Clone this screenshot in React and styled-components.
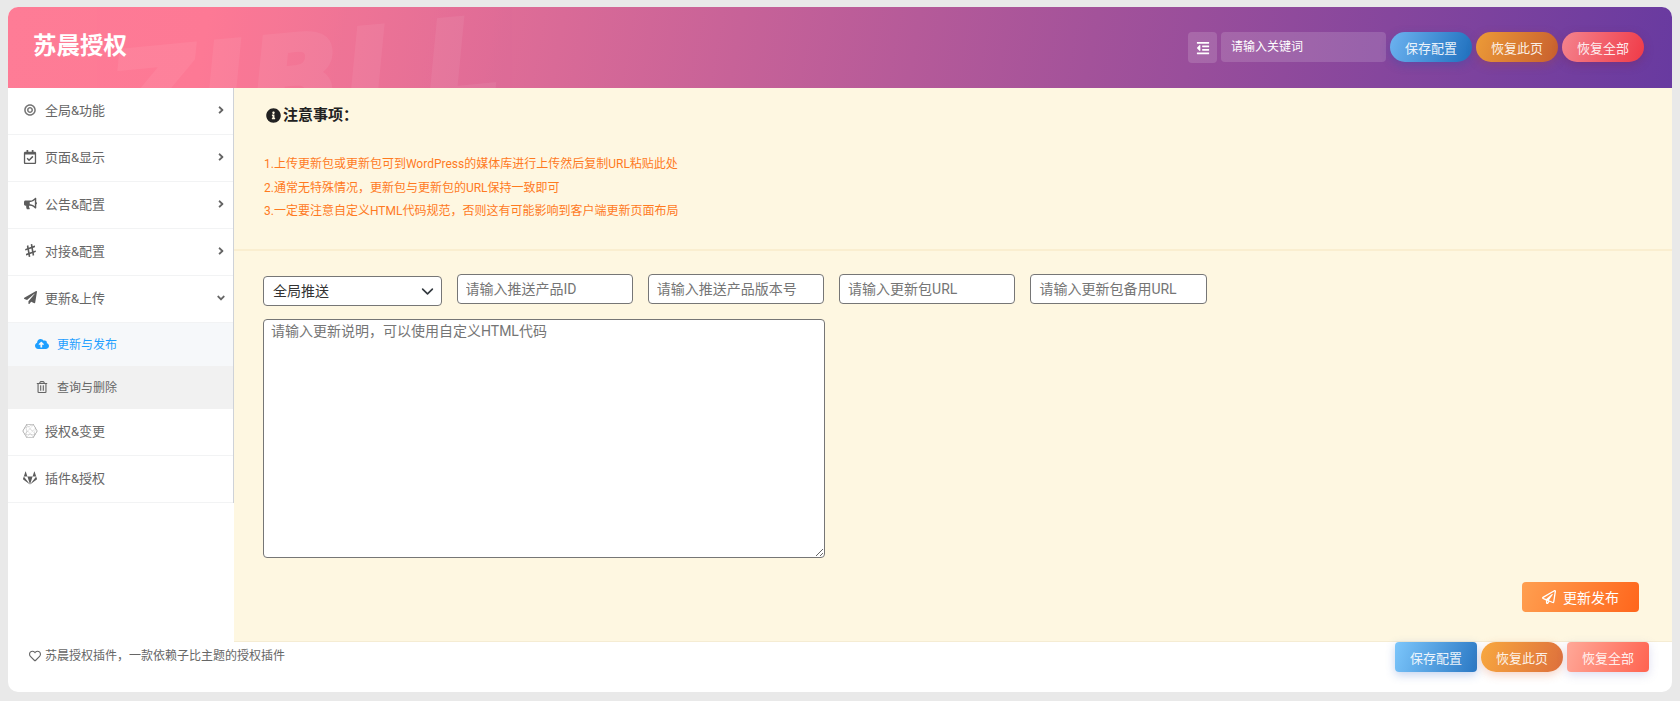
import React from 'react'
import styled, { createGlobalStyle } from 'styled-components'
import {
  FaBullseye, FaRegCalendarCheck, FaBullhorn, FaHashtag, FaPaperPlane, FaRegPaperPlane,
  FaCloudUploadAlt, FaRegTrashAlt, FaConnectdevelop, FaGitlab, FaAngleRight, FaAngleDown,
  FaInfoCircle, FaRegHeart, FaOutdent
} from 'react-icons/fa'

const font = `Roboto, "Noto Sans CJK SC", "Liberation Sans", sans-serif`

const chevron = `url("data:image/svg+xml,%3Csvg xmlns='http://www.w3.org/2000/svg' viewBox='0 0 16 16'%3E%3Cpath fill='none' stroke='%23343a40' stroke-linecap='round' stroke-linejoin='round' stroke-width='2' d='M2 5l6 6 6-6'/%3E%3C/svg%3E")`

const GlobalStyle = createGlobalStyle`
  html, body { margin: 0; padding: 0; background: #e9e9e9; }
  body { font-family: ${font}; font-size: 13px; color: #444; }
  * { box-sizing: border-box; }
`

const Page = styled.div`
  height: 701px;
  padding: 7px 8px 9px 8px;
  overflow: hidden;
`

const Card = styled.div`
  height: 685px;
  background: #fff;
  border-radius: 10px;
  overflow: hidden;
  display: flex;
  flex-direction: column;
`

const Header = styled.header`
  position: relative;
  flex: 0 0 81px;
  display: flex;
  align-items: center;
  justify-content: space-between;
  padding: 0 28px 0 25px;
  overflow: hidden;
  background: linear-gradient(100deg, #fe7c96 0%, #fd7a95 12%, #a3529a 65%, #683aa0 100%);
`

const Watermark = styled.span`
  position: absolute;
  left: 110px;
  top: 21px;
  font: italic 700 118px "DejaVu Sans", sans-serif;
  letter-spacing: 5px;
  color: #fff;
  -webkit-text-stroke: 5px #fff;
  opacity: 0.06;
  white-space: nowrap;
  transform: rotate(-5.5deg);
  transform-origin: left bottom;
`

const Title = styled.h1`
  position: relative;
  margin: 0 0 8px;
  font-size: 23.5px;
  font-weight: 700;
  color: #fff;
`

const Tools = styled.div`
  position: relative;
  display: flex;
  align-items: flex-start;
  gap: 4px;
`

const IconBox = styled.div`
  width: 29px;
  height: 31px;
  border-radius: 4px;
  background: rgba(255, 255, 255, 0.15);
  color: #fff;
  font-size: 14px;
  display: flex;
  align-items: center;
  justify-content: center;
`

const Search = styled.input`
  width: 165px;
  height: 30px;
  border: 0;
  outline: 0;
  border-radius: 4px;
  padding: 0 10px;
  font: 12px ${font};
  background: rgba(255, 255, 255, 0.15);
  &::placeholder { color: #fff; opacity: 1; }
`

const Pill = styled.button`
  width: 82px;
  height: 30px;
  border: 0;
  padding: 0;
  font: 13px ${font};
  color: rgba(255, 255, 255, 0.9);
  border-radius: ${props => props.$square ? '4px' : '15px'};
  background: ${props => props.$bg};
  box-shadow: 0 3px 10px ${props => props.$glow};
`

const Body = styled.div`
  flex: 1;
  display: flex;
  min-height: 0;
`

const Sidebar = styled.nav`
  flex: 0 0 226px;
  background: #fff;
`

const MenuList = styled.div`
  border-right: 1px solid #ced2d8;
`

const MenuItem = styled.div`
  height: 47px;
  display: flex;
  align-items: center;
  padding: 0 6px 3px 15px;
  border-bottom: 1px solid #f2f3f4;
  color: #666;
  font-size: 13px;
`

const MenuIcon = styled.span`
  flex: 0 0 14px;
  min-width: 0;
  margin-right: 8px;
  display: flex;
  justify-content: center;
  font-size: ${props => props.$size || 14}px;
  color: ${props => props.$color || '#5c5c5c'};
  svg { flex: none; }
`

const SlackMark = styled(FaHashtag)`
  transform: rotate(-20deg);
`

const Arrow = styled.span`
  margin-left: auto;
  display: flex;
  font-size: 12px;
  color: #666;
`

const SubItem = styled.div`
  height: 43px;
  display: flex;
  align-items: center;
  padding: 0 0 2px 27px;
  font-size: 12px;
  color: ${props => props.$active ? '#1e9fff' : '#666'};
  background: ${props => props.$active ? '#f6f8fa' : '#f1f1f1'};
  svg { width: 14px; font-size: 12px; margin-right: 8px; }
`

const Main = styled.main`
  flex: 1;
  background: #fef7e1;
  border-bottom: 1px solid #f5ecd3;
  display: flex;
  flex-direction: column;
`

const Notice = styled.section`
  height: 163px;
  padding: 17px 30px 0 30px;
  border-bottom: 2px solid #faeed0;
`

const NoticeTitle = styled.h4`
  margin: 0 0 28px 2px;
  font-size: 15px;
  font-weight: 700;
  line-height: 20px;
  color: #222;
  display: flex;
  align-items: center;
  gap: 2px;
`

const NoticeLine = styled.div`
  font-size: 12px;
  line-height: 23.7px;
  color: #ff7a1f;
`

const Form = styled.section`
  flex: 1;
  padding: 23px 30px 0 29px;
  display: flex;
  flex-direction: column;
`

const FieldRow = styled.div`
  display: flex;
  align-items: flex-start;
  gap: 15px;
`

const Select = styled.select`
  appearance: none;
  width: 178.5px;
  height: 30px;
  margin-top: 2px;
  padding: 0 9px;
  font: 14px ${font};
  color: #333;
  background: #fff ${chevron} no-repeat right 7px center / 13px;
  border: 1px solid #767676;
  border-radius: 4px;
`

const Input = styled.input`
  width: 176.3px;
  height: 30px;
  padding: 0 8px;
  font: 14px ${font};
  background: #fff;
  border: 1px solid #767676;
  border-radius: 4px;
  &::placeholder { color: #757575; }
`

const Textarea = styled.textarea`
  display: block;
  width: 562px;
  height: 239px;
  margin-top: 13px;
  padding: 0 7px;
  font: 14px ${font};
  background: #fff;
  border: 1px solid #767676;
  border-radius: 4px;
  &::placeholder { color: #757575; }
`

const Actions = styled.div`
  display: flex;
  justify-content: flex-end;
  margin: 24px 3px 0 0;
`

const Publish = styled.button`
  width: 117px;
  height: 30px;
  border: 0;
  border-radius: 4px;
  color: #fff;
  font: 14px ${font};
  background: linear-gradient(110deg, #ff9f50, #ff661c);
  display: flex;
  align-items: center;
  justify-content: center;
  gap: 7px;
`

const Footer = styled.footer`
  flex: 0 0 50px;
  display: flex;
  justify-content: space-between;
  align-items: flex-start;
  padding: 0 23px 0 21px;
`

const Copy = styled.div`
  font-size: 12px;
  line-height: 18px;
  color: #666;
  margin-top: 5px;
  display: flex;
  align-items: center;
  gap: 4px;
`

const FooterTools = styled.div`
  display: flex;
  gap: 4px;
`

const menu = [
  { icon: FaBullseye, label: '全局&功能', size: 12, color: '#777' },
  { icon: FaRegCalendarCheck, label: '页面&显示', size: 14 },
  { icon: FaBullhorn, label: '公告&配置', size: 13 },
  { icon: SlackMark, label: '对接&配置', size: 13 },
]

const notes = [
  '1.上传更新包或更新包可到WordPress的媒体库进行上传然后复制URL粘贴此处',
  '2.通常无特殊情况，更新包与更新包的URL保持一致即可',
  '3.一定要注意自定义HTML代码规范，否则这有可能影响到客户端更新页面布局',
]

export default function App() {
  return (
    <Page>
      <GlobalStyle />
      <Card>
        <Header>
          <Watermark aria-hidden="true">ZIBLL</Watermark>
          <Title>苏晨授权</Title>
          <Tools>
            <IconBox><FaOutdent /></IconBox>
            <Search placeholder="请输入关键词" />
            <Pill $bg="linear-gradient(110deg,#6db3f0,#1e6fbd)" $glow="rgba(40,80,170,.35)">保存配置</Pill>
            <Pill $bg="linear-gradient(110deg,#ec9b37,#c85f2e)" $glow="rgba(160,70,60,.35)">恢复此页</Pill>
            <Pill $bg="linear-gradient(110deg,#f4848e,#f03a47)" $glow="rgba(120,40,90,.4)">恢复全部</Pill>
          </Tools>
        </Header>
        <Body>
          <Sidebar>
            <MenuList>
              {menu.map(({ icon: Icon, label, size, color }) => (
                <MenuItem key={label}>
                  <MenuIcon $size={size} $color={color}><Icon /></MenuIcon>{label}<Arrow><FaAngleRight /></Arrow>
                </MenuItem>
              ))}
              <MenuItem><MenuIcon $size={13}><FaPaperPlane /></MenuIcon>更新&上传<Arrow><FaAngleDown /></Arrow></MenuItem>
              <SubItem $active><FaCloudUploadAlt />更新与发布</SubItem>
              <SubItem><FaRegTrashAlt />查询与删除</SubItem>
              <MenuItem><MenuIcon $size={16} $color="#999"><FaConnectdevelop /></MenuIcon>授权&变更</MenuItem>
              <MenuItem><MenuIcon><FaGitlab /></MenuIcon>插件&授权</MenuItem>
            </MenuList>
          </Sidebar>
          <Main>
            <Notice>
              <NoticeTitle><FaInfoCircle />注意事项：</NoticeTitle>
              {notes.map(n => <NoticeLine key={n}>{n}</NoticeLine>)}
            </Notice>
            <Form>
              <FieldRow>
                <Select defaultValue="all"><option value="all">全局推送</option></Select>
                <Input placeholder="请输入推送产品ID" />
                <Input placeholder="请输入推送产品版本号" />
                <Input placeholder="请输入更新包URL" />
                <Input placeholder="请输入更新包备用URL" />
              </FieldRow>
              <Textarea placeholder="请输入更新说明，可以使用自定义HTML代码" />
              <Actions><Publish><FaRegPaperPlane />更新发布</Publish></Actions>
            </Form>
          </Main>
        </Body>
        <Footer>
          <Copy><FaRegHeart />苏晨授权插件，一款依赖子比主题的授权插件</Copy>
          <FooterTools>
            <Pill $square $bg="linear-gradient(110deg,#7cc6fb,#2a78c4)" $glow="rgba(60,110,200,.3)">保存配置</Pill>
            <Pill $bg="linear-gradient(110deg,#f8a83f,#dd6f3c)" $glow="rgba(220,110,70,.3)">恢复此页</Pill>
            <Pill $square $bg="linear-gradient(110deg,#ffa898,#ff6350)" $glow="rgba(120,120,200,.25)">恢复全部</Pill>
          </FooterTools>
        </Footer>
      </Card>
    </Page>
  )
}
